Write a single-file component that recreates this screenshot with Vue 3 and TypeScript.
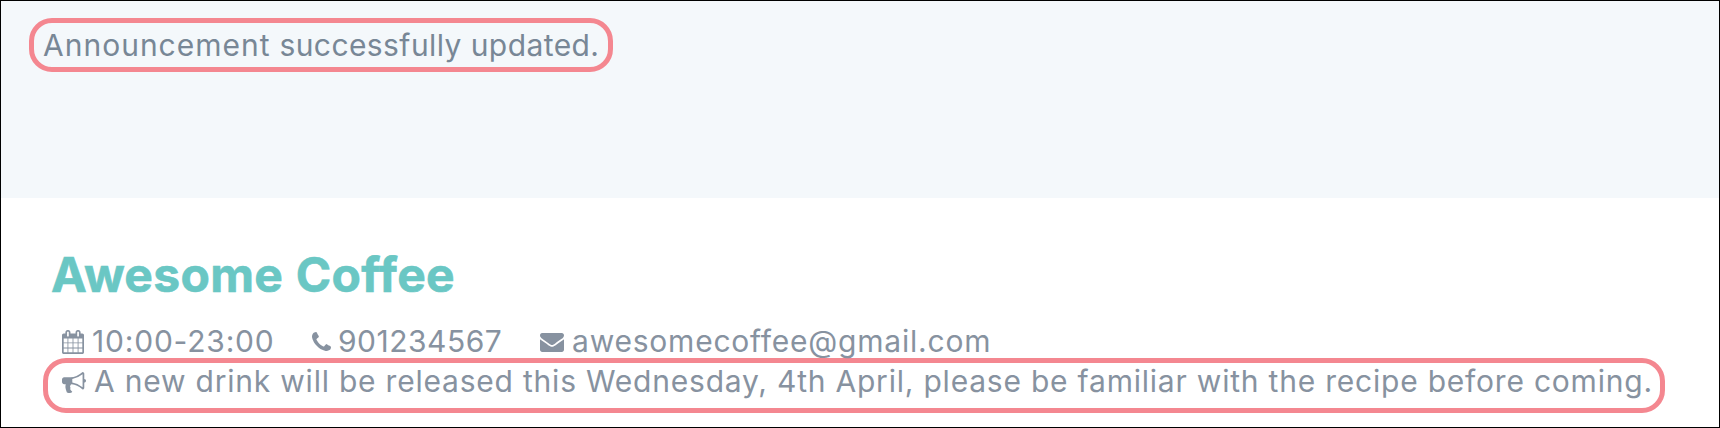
<script setup lang="ts">
interface Contact {
  kind: string
  viewBox: string
  path: string
  text: string
}

const noticeWords = ['Announcement', 'successfully', 'updated.']
const shopName = 'Awesome Coffee'
const announcement =
  'A new drink will be released this Wednesday, 4th April, please be familiar with the recipe before coming.'

const contacts: Contact[] = [
  {
    kind: 'hours',
    viewBox: '64 0 1664 1792',
    path: 'M192 1664h288v-288h-288v288zm352 0h320v-288h-320v288zm-352-352h288v-320h-288v320zm352 0h320v-320h-320v320zm-352-384h288v-288h-288v288zm736 736h320v-288h-320v288zm-384-736h320v-288h-320v288zm768 736h288v-288h-288v288zm-384-352h320v-320h-320v320zm-352-864v-288q0-13-9.5-22.5t-22.5-9.5h-64q-13 0-22.5 9.5t-9.5 22.5v288q0 13 9.5 22.5t22.5 9.5h64q13 0 22.5-9.5t9.5-22.5zm736 864h288v-320h-288v320zm-384-384h320v-288h-320v288zm384 0h288v-288h-288v288zm32-480v-288q0-13-9.5-22.5t-22.5-9.5h-64q-13 0-22.5 9.5t-9.5 22.5v288q0 13 9.5 22.5t22.5 9.5h64q13 0 22.5-9.5t9.5-22.5zm384-64v1280q0 52-38 90t-90 38h-1408q-52 0-90-38t-38-90v-1280q0-52 38-90t90-38h128v-96q0-66 47-113t113-47h64q66 0 113 47t47 113v96h384v-96q0-66 47-113t113-47h64q66 0 113 47t47 113v96h128q52 0 90 38t38 90z',
    text: '10:00-23:00',
  },
  {
    kind: 'phone',
    viewBox: '192 128 1408 1408',
    path: 'M1600 1240q0 27-10 70.5t-21 68.5q-21 50-122 106-94 51-186 51-27 0-53-3.5t-57.5-12.5-47-14.5-55.5-20.5-49-18q-98-35-175-83-127-79-264-216t-216-264q-48-77-83-175-3-9-18-49t-20.5-55.5-14.5-47-12.5-57.5-3.5-53q0-92 51-186 56-101 106-122 25-11 68.5-21t70.5-10q14 0 21 3 18 6 53 76 11 19 30 54t35 63.5 31 53.5q3 4 17.5 25t21.5 35.5 7 28.5q0 20-28.5 50t-62 55-62 53-28.5 46q0 9 5 22.5t8.5 20.5 14 24 11.5 19q76 137 174 235t235 174q2 1 19 11.5t24 14 20.5 8.5 22.5 5q18 0 46-28.5t53-62 55-62 50-28.5q14 0 28.5 7t35.5 21.5 25 17.5q25 15 53.5 31t63.5 35 54 30q70 35 76 53 3 7 3 21z',
    text: '901234567',
  },
  {
    kind: 'email',
    viewBox: '0 256 1792 1408',
    path: 'M1792 710v794q0 66-47 113t-113 47h-1472q-66 0-113-47t-47-113v-794q44 49 101 87 362 246 497 345 57 42 92.5 65.5t94.5 48 110 24.5h2q51 0 110-24.5t94.5-48 92.5-65.5q170-123 498-345 57-39 100-87zm0-294q0 79-49 151t-122 123q-376 261-468 325-10 7-42.5 31t-54 38.5-52 32.5-57.5 27-50 9h-2q-23 0-50-9t-57.5-27-52-32.5-54-38.5-42.5-31q-91-64-262-182.5t-205-142.5q-62-42-117-115.5t-55-136.5q0-78 41.5-130t118.5-52h1472q65 0 112.5 47t47.5 113z',
    text: 'awesomecoffee@gmail.com',
  },
]
</script>

<template>
  <div class="page">
    <header class="banner">
      <p class="notice callout">
        <template v-for="(word, i) in noticeWords" :key="word"><span :class="{ wide: i === 0 }">{{ word }}</span>{{ ' ' }}</template>
      </p>
    </header>
    <main class="shop">
      <h1 class="name">{{ shopName }}</h1>
      <div class="contacts">
        <div v-for="c in contacts" :key="c.kind" class="contact" :class="c.kind">
          <svg class="icon" :viewBox="c.viewBox" preserveAspectRatio="none" aria-hidden="true"><path :d="c.path" /></svg>
          <span>{{ c.text }}</span>
        </div>
      </div>
      <div class="announcement callout">
        <svg class="icon" viewBox="0 128 1792 1536" preserveAspectRatio="none" aria-hidden="true">
          <path d="M1664 640q53 0 90.5 37.5t37.5 90.5-37.5 90.5-90.5 37.5v384q0 52-38 90t-90 38q-417-347-812-380-58 19-91 66t-31 100.5 40 92.5q-20 33-23 65.5t6 58 33.5 55 48 50 61.5 50.5q-29 58-111.5 83t-168.5 11.5-132-55.5q-7-23-29.5-87.5t-32-94.5-23-89-15-101 3.5-98.5 22-110.5h-122q-66 0-113-47t-47-113v-192q0-66 47-113t113-47h480q435 0 896-384 52 0 90 38t38 90v384zm-128 604v-954q-394 302-768 343v270q377 42 768 341z" />
        </svg>
        <span>{{ announcement }}</span>
      </div>
    </main>
  </div>
</template>

<style scoped>
.page {
  box-sizing: border-box;
  width: 1720px;
  height: 428px;
  border: 1px solid #000;
  background: #fff;
  color: #8792a0;
  font-family: Inter, "Liberation Sans", sans-serif;
  font-size: 30px;
  line-height: 34px;
  font-kerning: normal;
  white-space: nowrap;
  overflow: hidden;
}
.banner {
  box-sizing: border-box;
  height: 197px;
  padding: 17px 0 0 28px;
  background: #f4f8fb;
}
.callout {
  box-sizing: border-box;
  margin: 0;
  border: 5px solid #f48790;
  border-radius: 23px;
}
.notice {
  width: 584px;
  height: 54px;
  padding: 5px 0 0 9px;
  color: #788796;
  letter-spacing: 0.42px;
}
.notice .wide {
  letter-spacing: 1px;
}
.name {
  margin: 0;
  padding: 49px 0 0 50px;
  color: #6ac7c4;
  font-size: 48px;
  font-weight: 700;
  letter-spacing: 0.3px;
  word-spacing: 1px;
  -webkit-text-stroke: 0.6px #6ac7c4;
  line-height: 56px;
}
.contacts {
  display: flex;
  height: 34px;
  margin-top: 21px;
  padding-left: 61px;
}
.contact {
  display: flex;
  align-items: flex-start;
}
.icon {
  display: block;
  flex: none;
  fill: #8792a0;
}
.hours {
  width: 250px;
  letter-spacing: 0.8px;
}
.hours .icon {
  width: 22px;
  height: 24px;
  margin: 6px 8px 0 0;
}
.phone {
  width: 228px;
  letter-spacing: 0.5px;
}
.phone .icon {
  width: 19px;
  height: 19px;
  margin: 8px 7px 0 0;
}
.email {
  letter-spacing: 0.78px;
}
.email .icon {
  width: 24px;
  height: 19px;
  margin: 9px 8px 0 0;
}
.announcement {
  display: flex;
  align-items: flex-start;
  width: 1622px;
  height: 55px;
  margin-left: 42px;
  padding: 1px 0 0 14px;
  letter-spacing: 0.785px;
}
.announcement .icon {
  width: 24px;
  height: 21px;
  margin: 8px 8px 0 0;
}
</style>
